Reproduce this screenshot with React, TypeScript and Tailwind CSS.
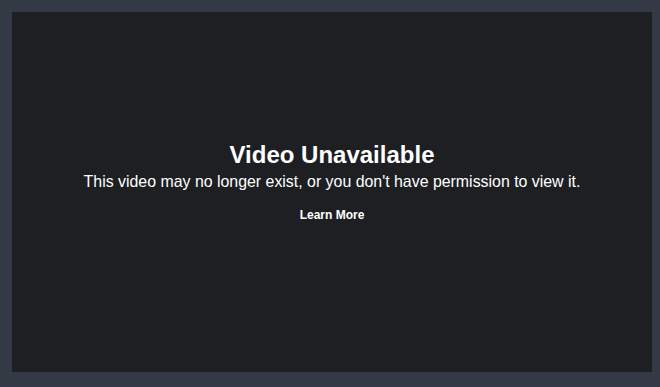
export default function App() {
  return (
    <div
      className="h-[387px] w-[660px] bg-[#333945] pl-3 pt-3"
      style={{ fontFamily: '"Liberation Sans", Arial, sans-serif' }}
    >
      <div className="flex h-[360px] w-[640px] flex-col items-center justify-center bg-[#1e1f23] pb-5 text-white">
        <h1 className="mb-1 text-[24px] font-bold leading-[26px]">Video Unavailable</h1>
        <p className="text-[15.9px] leading-[20px]">
          This video may no longer exist, or you don't have permission to view it.
        </p>
        <button className="mt-4 text-[12px] font-bold leading-[14px] text-white">Learn More</button>
      </div>
    </div>
  );
}
